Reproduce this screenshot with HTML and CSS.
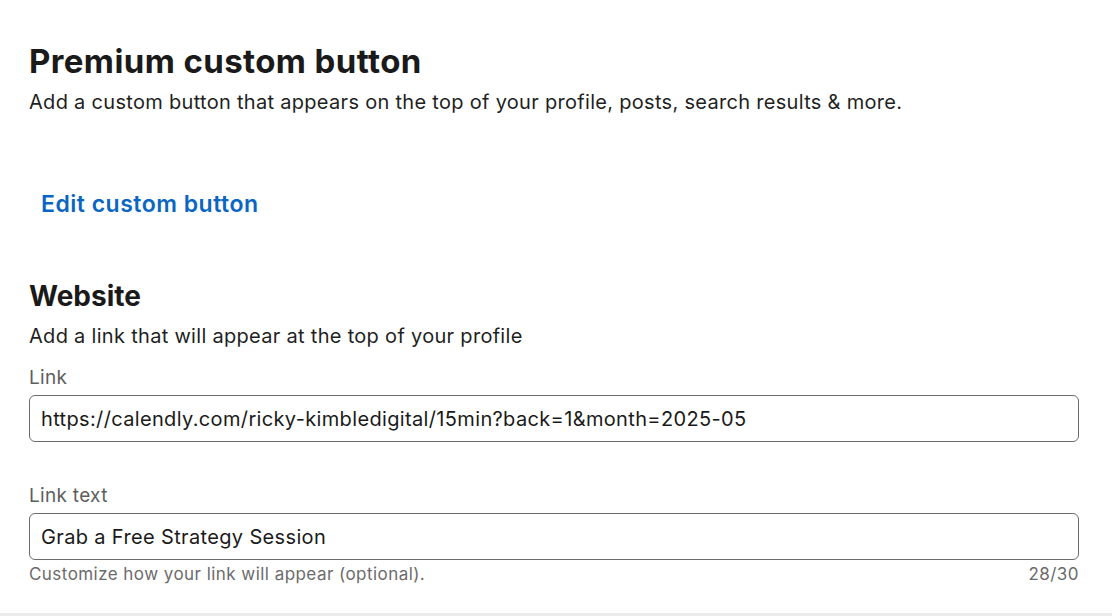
FILE: index.html
```html
<!DOCTYPE html>
<html lang="en">
<head>
<meta charset="utf-8">
<title>Premium custom button</title>
<link rel="stylesheet" href="styles.css">
</head>
<body>
<main class="page">
  <section class="section">
    <h1 class="title">Premium custom button</h1>
    <p class="desc">Add a custom button that appears on the top of your profile, posts, search results &amp; more.</p>
    <button class="link-btn" type="button">Edit custom button</button>
  </section>
  <section class="section website">
    <h2 class="subtitle">Website</h2>
    <p class="desc desc-tight">Add a link that will appear at the top of your profile</p>
    <div class="field">
      <label class="label" for="link">Link</label>
      <input class="input" id="link" type="text" value="https://calendly.com/ricky-kimbledigital/15min?back=1&amp;month=2025-05">
    </div>
    <div class="field field-second">
      <label class="label" for="linktext">Link text</label>
      <input class="input" id="linktext" type="text" value="Grab a Free Strategy Session">
      <div class="hint-row">
        <span class="hint">Customize how your link will appear (optional).</span>
        <span class="hint">28/30</span>
      </div>
    </div>
  </section>
  <div class="footer-band"></div>
</main>
</body>
</html>
```
FILE: styles.css
```css
html, body {
  margin: 0;
  padding: 0;
  background: #ffffff;
}
body {
  font-family: Inter, "Noto Sans", "Liberation Sans", sans-serif;
  color: #1a1a1a;
}
.page {
  display: flex;
  flex-direction: column;
  padding: 41px 33px 0 29px;
  min-height: 616px;
  box-sizing: border-box;
}
.section {
  display: flex;
  flex-direction: column;
  align-items: flex-start;
}
.title {
  margin: 0;
  font-size: 33px;
  line-height: 40px;
  font-weight: 700;
  letter-spacing: 0.4px;
  color: #1a1a1a;
}
.desc {
  margin: 7px 0 0 0;
  font-size: 20px;
  line-height: 28px;
  font-weight: 400;
  letter-spacing: 0.3px;
  color: #1f1f1f;
}
.link-btn {
  margin: 73px 0 0 0;
  padding: 0 12px;
  border: none;
  background: transparent;
  font-family: inherit;
  font-size: 23px;
  line-height: 30px;
  font-weight: 600;
  letter-spacing: 0.5px;
  color: #0a66c2;
  cursor: pointer;
}
.website {
  margin-top: 60px;
}
.subtitle {
  margin: 0;
  font-size: 28px;
  line-height: 34px;
  font-weight: 700;
  letter-spacing: 0;
  color: #1a1a1a;
}
.desc-tight {
  margin-top: 9px;
}
.field {
  display: flex;
  flex-direction: column;
  align-self: stretch;
  margin-top: 16px;
}
.field-second {
  margin-top: 42px;
}
.label {
  font-size: 19px;
  line-height: 24px;
  letter-spacing: 0.3px;
  color: #5e5e5e;
  margin-bottom: 5px;
}
.input {
  box-sizing: border-box;
  height: 47px;
  width: 100%;
  border: 1px solid #6b6b6b;
  border-radius: 6px;
  padding: 0 11px;
  font-family: inherit;
  font-size: 20px;
  letter-spacing: 0.35px;
  color: #1a1a1a;
  background: #fff;
  outline: none;
}
.hint-row {
  display: flex;
  justify-content: space-between;
  margin-top: 4px;
}
.hint {
  font-size: 17px;
  line-height: 20px;
  letter-spacing: 0.45px;
  color: #6b6b6b;
}
.footer-band {
  margin: auto -33px 0 -29px;
  height: 3px;
  background: #ebebeb;
}
```
